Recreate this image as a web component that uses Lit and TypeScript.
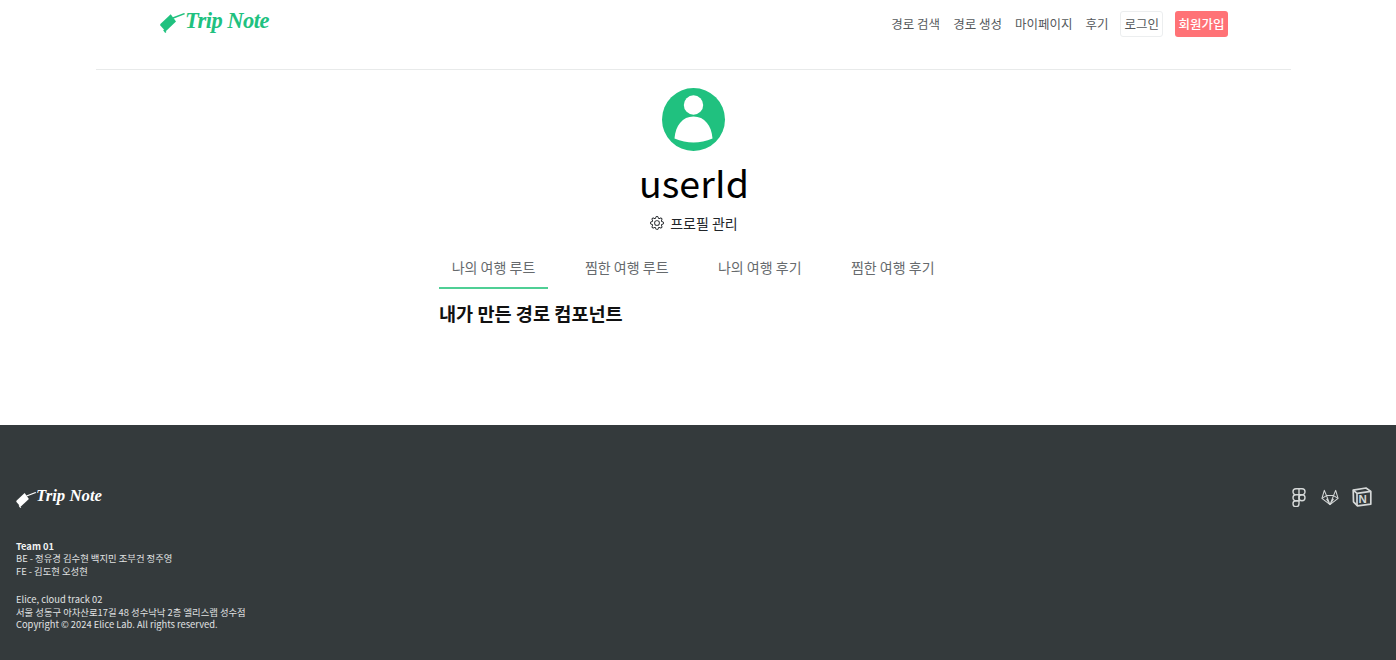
import { LitElement, html, css } from "lit";
import { customElement } from "lit/decorators.js";

const gear = "M8 4.754a3.246 3.246 0 1 0 0 6.492 3.246 3.246 0 0 0 0-6.492zM5.754 8a2.246 2.246 0 1 1 4.492 0 2.246 2.246 0 0 1-4.492 0z M9.796 1.343c-.527-1.79-3.065-1.79-3.592 0l-.094.319a.873.873 0 0 1-1.255.52l-.292-.16c-1.64-.892-3.433.902-2.54 2.541l.159.292a.873.873 0 0 1-.52 1.255l-.319.094c-1.79.527-1.79 3.065 0 3.592l.319.094a.873.873 0 0 1 .52 1.255l-.16.292c-.892 1.64.901 3.434 2.541 2.54l.292-.159a.873.873 0 0 1 1.255.52l.094.319c.527 1.79 3.065 1.79 3.592 0l.094-.319a.873.873 0 0 1 1.255-.52l.292.16c1.64.893 3.434-.902 2.54-2.541l-.159-.292a.873.873 0 0 1 .52-1.255l.319-.094c1.79-.527 1.79-3.065 0-3.592l-.319-.094a.873.873 0 0 1-.52-1.255l.16-.292c.893-1.64-.902-3.433-2.541-2.54l-.292.159a.873.873 0 0 1-1.255-.52l-.094-.319zm-2.633.283c.246-.835 1.428-.835 1.674 0l.094.319a1.873 1.873 0 0 0 2.693 1.115l.291-.16c.764-.415 1.6.42 1.184 1.185l-.159.292a1.873 1.873 0 0 0 1.116 2.692l.318.094c.835.246.835 1.428 0 1.674l-.319.094a1.873 1.873 0 0 0-1.115 2.693l.16.291c.415.764-.42 1.6-1.185 1.184l-.291-.159a1.873 1.873 0 0 0-2.693 1.116l-.094.318c-.246.835-1.428.835-1.674 0l-.094-.319a1.873 1.873 0 0 0-2.692-1.115l-.292.16c-.764.415-1.6-.42-1.184-1.185l.159-.291A1.873 1.873 0 0 0 1.945 8.93l-.319-.094c-.835-.246-.835-1.428 0-1.674l.319-.094A1.873 1.873 0 0 0 3.06 4.377l-.16-.292c-.415-.764.42-1.6 1.185-1.184l.292.159a1.873 1.873 0 0 0 2.692-1.115l.094-.319z";

const suitcase = (w: number, h: number) => html`<svg class="case" width=${w} height=${h} viewBox="0 0 26 20" fill="currentColor">
  <path d="M0.4 11 L10.7 1.2 L16 8.6 L6.6 17.6 Q5.6 18.3 4.8 17.4 L0.4 12.4 Q0 11.6 .4 11 Z"/>
  <path d="M3.8 16.8 l2 2.6" stroke="currentColor" stroke-width="1.6" fill="none"/>
  <path d="M13 5 L24.6 0.6" stroke="currentColor" stroke-width="1.5" fill="none"/>
</svg>`;

@customElement("app-root")
export class AppRoot extends LitElement {
  static styles = css`
    :host { display: block; font-family: "Noto Sans CJK KR", "Noto Sans", sans-serif; background: #fff; color: #000; }
    .main { width: 1388px; height: 425px; box-sizing: border-box; padding: 0 97px 0 96px; }
    header { height: 69px; box-sizing: content-box; border-bottom: 1px solid #e8eaea; padding: 0 63px 0 64px; display: flex; justify-content: space-between; align-items: flex-start; }
    .logo { display: flex; align-items: flex-start; color: #20c17f; }
    .logo .case { margin-top: 13px; }
    .brand { font-family: "Liberation Serif", serif; font-style: italic; font-weight: 700; line-height: 1; white-space: nowrap; }
    .logo .brand { font-size: 22.5px; margin-top: 10px; margin-left: -1px; letter-spacing: -0.5px; }
    nav { display: flex; align-items: center; gap: 13px; margin-top: 11px; font-size: 12.5px; color: #55595c; }
    nav a { line-height: 26px; white-space: nowrap; }
    .btn { box-sizing: border-box; height: 26px; padding: 0 3px; border-radius: 3px; line-height: 24px; }
    .login { border: 1px solid #eceeef; margin-left: -1px; }
    .join { background: #ff7276; color: #fff; line-height: 26px; font-weight: 500; padding: 0 3.5px; margin-left: -1px; }
    .profile { display: flex; flex-direction: column; align-items: center; margin-left: 1px; }
    .avatar { display: block; margin-top: 18px; }
    h1 { margin: 5px 0 0; font-size: 37.5px; font-weight: 400; line-height: 50px; }
    .manage { display: flex; align-items: center; gap: 6px; font-size: 14px; line-height: 20px; margin-top: 6px; color: #212529; }
    .tabs { margin: 16px 0 0 343px; display: flex; gap: 24.5px; }
    .tab { width: 108.5px; box-sizing: border-box; height: 40px; text-align: center; font-size: 14px; line-height: 37px; color: #666a6d; white-space: nowrap; }
    .tab.on { width: 109px; border-bottom: 2px solid #4fcf95; line-height: 36px; }
    h2 { margin: 10px 0 0 343px; font-size: 18.6px; font-weight: 700; line-height: 28px; color: #111; }
    footer { background: #343a3c; height: 235px; box-sizing: border-box; padding: 58px 24px 0 16px; color: #e0e2e3; display: flex; justify-content: space-between; align-items: flex-start; }
    .flogo { display: flex; align-items: flex-start; color: #fff; height: 57px; }
    .flogo .case { margin-top: 9px; }
    .flogo .brand { font-size: 16.8px; margin-top: 5px; margin-left: -1px; }
    .info { font-size: 9.35px; line-height: 12.4px; }
    .info b { color: #f2f3f3; }
    .gap { height: 16px; }
    .icons { display: flex; gap: 15px; align-items: center; margin-top: 4px; color: #d5d8d8; }
    .notion { margin-left: -2px; }
  `;

  render() {
    return html`
      <div class="main">
        <header>
          <div class="logo">${suitcase(26, 20)}<span class="brand">Trip Note</span></div>
          <nav>
            <a>경로 검색</a><a>경로 생성</a><a>마이페이지</a><a>후기</a>
            <a class="btn login">로그인</a><a class="btn join">회원가입</a>
          </nav>
        </header>
        <section class="profile">
          <svg class="avatar" width="64" height="64" viewBox="0 0 64 64">
            <circle cx="31.5" cy="31.5" r="31.5" fill="#20c17f"/>
            <circle cx="31.5" cy="17" r="9.7" fill="#fff"/>
            <path d="M12.5 50.5 C13.5 37.5 20.5 28.5 31.5 28.5 C42.5 28.5 49.5 37.5 50.5 50.5 Q31.5 58.5 12.5 50.5 Z" fill="#fff"/>
          </svg>
          <h1>userId</h1>
          <div class="manage">
            <svg width="14" height="14" viewBox="0 0 16 16" fill="#212529"><path d=${gear}/></svg>
            <span>프로필 관리</span>
          </div>
        </section>
        <div class="tabs">
          <div class="tab on">나의 여행 루트</div>
          <div class="tab">찜한 여행 루트</div>
          <div class="tab">나의 여행 후기</div>
          <div class="tab">찜한 여행 후기</div>
        </div>
        <h2>내가 만든 경로 컴포넌트</h2>
      </div>
      <footer>
        <div>
          <div class="flogo">${suitcase(21, 16)}<span class="brand">Trip Note</span></div>
          <div class="info">
            <b>Team 01</b><br />
            BE - 정유경 김수현 백지민 조부건 정주영<br />
            FE - 김도현 오성현
            <div class="gap"></div>
            Elice, cloud track 02<br />
            서울 성동구 아차산로17길 48 성수낙낙 2층 엘리스랩 성수점<br />
            Copyright © 2024 Elice Lab. All rights reserved.
          </div>
        </div>
        <div class="icons">
          <svg width="14" height="19" viewBox="0 0 14 19" fill="none" stroke="currentColor" stroke-width="1.4">
            <path d="M7 .8 H4 a3 3 0 0 0 0 6 H7 Z M7 .8 h3 a3 3 0 0 1 0 6 H7 Z M7 6.8 H4 a3 3 0 0 0 0 6 H7 Z"/>
            <circle cx="10" cy="9.8" r="3"/>
            <path d="M7 12.8 H4 a3 3 0 1 0 3 3 Z"/>
          </svg>
          <svg width="18" height="18" viewBox="0 0 19 18" fill="none" stroke="currentColor" stroke-width="1.1" stroke-linejoin="round">
            <path d="M9.5 17 L1 10.5 L3.5 2 L5.8 7.5 H13.2 L15.5 2 L18 10.5 Z"/>
            <path d="M1 10.5 L5.8 7.5 L9.5 17 L13.2 7.5 L18 10.5 M5.8 11 L9.5 17 L13.2 11"/>
          </svg>
          <svg class="notion" width="20" height="20" viewBox="0 0 20 20" fill="none" stroke="currentColor" stroke-width="1.7" stroke-linejoin="round">
            <path d="M1.2 3.2 L14 1 L18.8 4.4 V17.2 L5.5 18.9 L1.5 14.8 Z"/>
            <path d="M1.2 3.2 L5 6.4 L18.8 4.4 M5 6.4 V18.8"/>
            <text x="6.6" y="16" font-family="Liberation Sans, sans-serif" font-size="11.5" font-weight="700" fill="currentColor" stroke="none">N</text>
          </svg>
        </div>
      </footer>
    `;
  }
}
